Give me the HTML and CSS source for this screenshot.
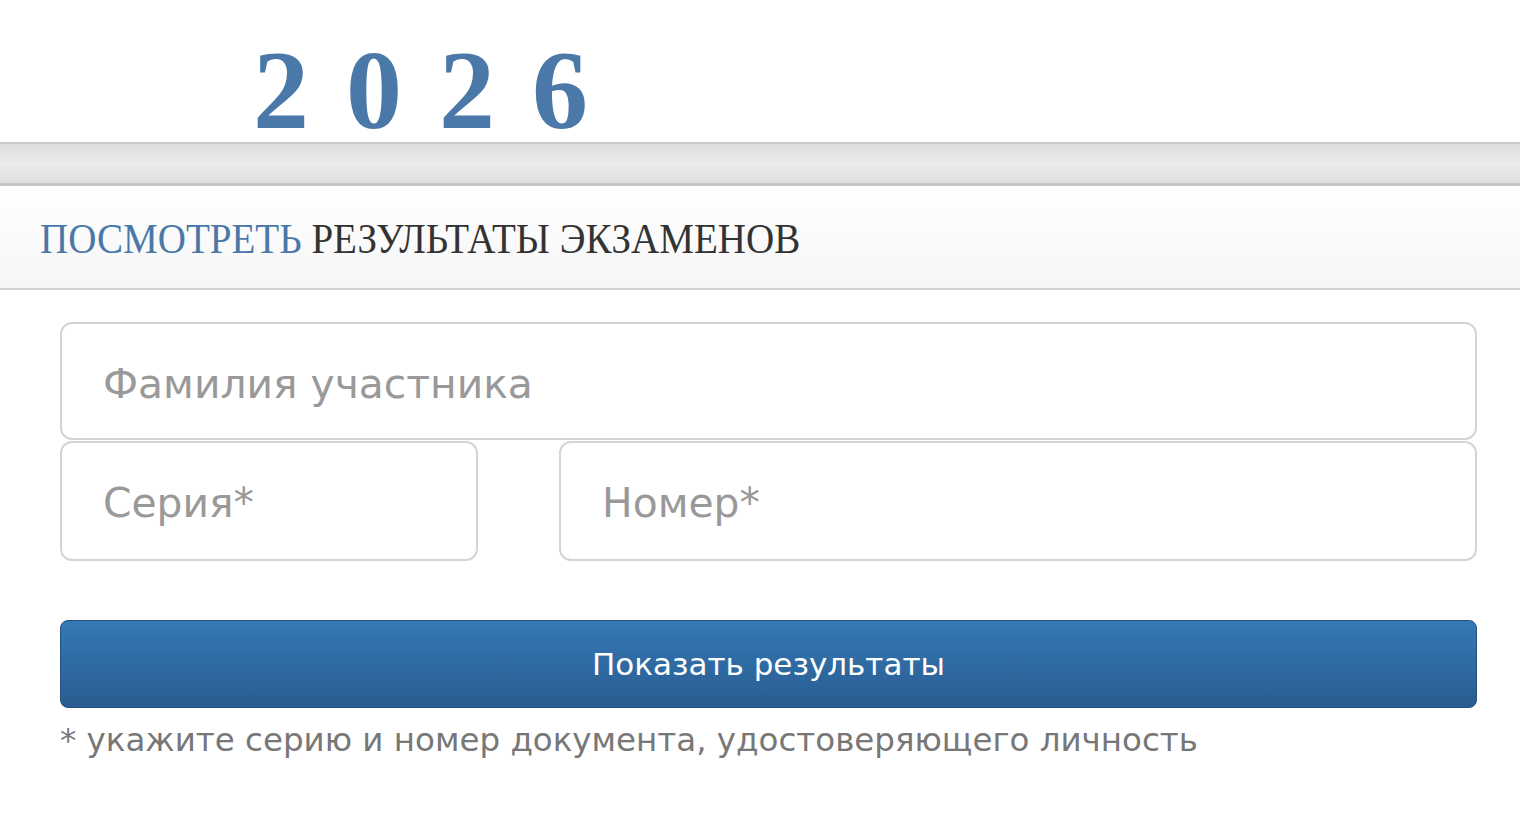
FILE: index.html
```html
<!DOCTYPE html>
<html lang="ru">
<head>
<meta charset="utf-8">
<title>Результаты экзаменов 2026</title>
<link rel="stylesheet" href="styles.css">
</head>
<body>
<header class="top">
  <div class="year">2026</div>
</header>
<div class="bar"></div>
<div class="heading">
  <h1 class="title"><span class="accent">ПОСМОТРЕТЬ</span> РЕЗУЛЬТАТЫ ЭКЗАМЕНОВ</h1>
</div>
<form class="form">
  <div class="field full"><input class="input" type="text" placeholder="Фамилия участника"></div>
  <div class="row">
    <div class="field series"><input class="input" type="text" placeholder="Серия*"></div>
    <div class="field number"><input class="input" type="text" placeholder="Номер*"></div>
  </div>
  <button class="btn" type="button">Показать результаты</button>
  <p class="note">* укажите серию и номер документа, удостоверяющего личность</p>
</form>
</body>
</html>
```
FILE: styles.css
```css
* { box-sizing: border-box; }
html, body { margin: 0; padding: 0; background: #fff; }
body { font-family: "DejaVu Sans", Tahoma, sans-serif; width: 1520px; height: 818px; overflow: hidden; }

.top { height: 142px; padding-left: 253px; }
.year {
  font-family: "Liberation Serif", "Times New Roman", serif;
  font-weight: bold;
  font-size: 112px;
  line-height: 1;
  color: #4a78a8;
  letter-spacing: 37px;
  padding-top: 34px;
}

.bar {
  height: 44px;
  border-top: 2px solid #c9c9c9;
  border-bottom: 3px solid #c6c6c6;
  background: linear-gradient(#dcdcdc, #ececec 50%, #dedede);
}

.heading {
  height: 104px;
  border-bottom: 2px solid #cfcfcf;
  background: linear-gradient(#ffffff, #f6f6f6);
  padding-left: 40px;
  display: flex;
  align-items: center;
}
.title {
  margin: 0;
  font-family: "Liberation Serif", "Times New Roman", serif;
  font-weight: normal;
  font-size: 42px;
  color: #333;
  transform: scaleX(0.93);
  transform-origin: left center;
  white-space: nowrap;
  padding-top: 4px;
}
.accent { color: #4a78a8; }

.form { padding: 32px 43px 0 60px; }
.field { display: flex; }
.input {
  width: 100%;
  height: 118px;
  border: 2px solid #d4d4d4;
  border-radius: 12px;
  background: #fff;
  padding: 5px 0 0 41px;
  font-family: inherit;
  font-size: 40.8px;
  color: #555;
  outline: none;
}
.input::placeholder { color: #999; }
.row { display: flex; gap: 81px; margin-top: 1px; }
.series { width: 418px; flex: none; }
.number { flex: 1; }
.row .input { height: 120px; padding-top: 4px; }

.btn {
  display: block;
  width: 100%;
  height: 88px;
  margin-top: 59px;
  border: 1px solid #24517f;
  border-radius: 8px;
  background: linear-gradient(#3479b6, #2a5c90);
  color: #fff;
  font-family: inherit;
  font-size: 31px;
  cursor: pointer;
}
.note {
  margin: 12px 0 0 0;
  color: #777;
  font-size: 32.5px;
  line-height: 40px;
  white-space: nowrap;
}
```
